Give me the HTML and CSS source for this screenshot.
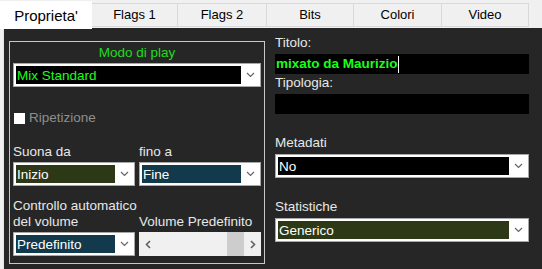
FILE: index.html
```html
<!DOCTYPE html>
<html lang="it">
<head>
    <meta charset="UTF-8">
    <title>Proprieta'</title>
    <link rel="stylesheet" href="styles.css">
</head>
<body>

<div class="tabs">
    <div class="tab active">Proprieta'</div>
    <div class="tab w86">Flags 1</div>
    <div class="tab w89">Flags 2</div>
    <div class="tab w87">Bits</div>
    <div class="tab w88">Colori</div>
    <div class="tab w87">Video</div>
</div>

<div class="panel">
    <div class="group">
        <div class="legend">Modo di play</div>
        <div class="combo">
            <div class="val black green">Mix Standard</div>
            <div class="arr"><svg width="9" height="6" viewBox="0 0 9 6"><polyline points="1,1 4.5,4.5 8,1" fill="none" stroke="#666" stroke-width="1.2"/></svg></div>
        </div>

        <label class="check"><span class="box"></span>Ripetizione</label>

        <div class="grid row1">
            <div class="lbl">Suona da</div>
            <div class="lbl">fino a</div>
            <div class="combo">
                <div class="val olive">Inizio</div>
                <div class="arr"><svg width="9" height="6" viewBox="0 0 9 6"><polyline points="1,1 4.5,4.5 8,1" fill="none" stroke="#666" stroke-width="1.2"/></svg></div>
            </div>
            <div class="combo">
                <div class="val teal">Fine</div>
                <div class="arr"><svg width="9" height="6" viewBox="0 0 9 6"><polyline points="1,1 4.5,4.5 8,1" fill="none" stroke="#666" stroke-width="1.2"/></svg></div>
            </div>
        </div>

        <div class="grid row2">
            <div class="lbl">Controllo automatico<br>del volume</div>
            <div class="lbl bottom">Volume Predefinito</div>
            <div class="combo">
                <div class="val teal">Predefinito</div>
                <div class="arr"><svg width="9" height="6" viewBox="0 0 9 6"><polyline points="1,1 4.5,4.5 8,1" fill="none" stroke="#666" stroke-width="1.2"/></svg></div>
            </div>
            <div class="scroll">
                <div class="sarr"><svg width="6" height="9" viewBox="0 0 6 9"><polyline points="5,1 1.5,4.5 5,8" fill="none" stroke="#606060" stroke-width="1.6"/></svg></div>
                <div class="track"><div class="thumb"></div></div>
                <div class="sarr"><svg width="6" height="9" viewBox="0 0 6 9"><polyline points="1,1 4.5,4.5 1,8" fill="none" stroke="#606060" stroke-width="1.6"/></svg></div>
            </div>
        </div>
    </div>

    <div class="side">
        <div class="lbl">Titolo:</div>
        <div class="field bold green">mixato da Maurizio<span class="caret"></span></div>
        <div class="lbl">Tipologia:</div>
        <div class="field"></div>

        <div class="lbl gap">Metadati</div>
        <div class="combo">
            <div class="val black">No</div>
            <div class="arr"><svg width="9" height="6" viewBox="0 0 9 6"><polyline points="1,1 4.5,4.5 8,1" fill="none" stroke="#666" stroke-width="1.2"/></svg></div>
        </div>

        <div class="lbl gap">Statistiche</div>
        <div class="combo">
            <div class="val olive">Generico</div>
            <div class="arr"><svg width="9" height="6" viewBox="0 0 9 6"><polyline points="1,1 4.5,4.5 8,1" fill="none" stroke="#666" stroke-width="1.2"/></svg></div>
        </div>
    </div>
</div>

</body>
</html>
```

FILE: styles.css
```css
body,div{margin:0;padding:0}
body{
    font:13.5px/16px "Liberation Sans", Arial, sans-serif;
    background:#f0f0f0;
    color:#e8e8e8;
    width:542px;
    height:269px;
    overflow:hidden;
}
.tabs{
    display:flex;
    height:28px;
    color:#000;
    font-size:13px;
}
.tab{
    height:24px;
    margin-top:3px;
    box-sizing:border-box;
    border:1px solid #d9d9d9;
    border-left:0;
    background:#f0f0f0;
    text-align:center;
    line-height:22px;
}
.tab.active{
    width:92px;
    height:28px;
    margin-top:1px;
    border:0;
    background:#fff;
    line-height:30px;
    font-size:15px;
}
.w86{width:86px}
.w87{width:87px}
.w88{width:88px}
.w89{width:89px}

.panel{
    display:flex;
    height:241px;
    margin-left:3px;
    border-left:1px solid #e4e4e4;
    background:#262626;
    padding:13px 0 0 5px;
    box-sizing:border-box;
}
.group{
    width:256px;
    height:223px;
    box-sizing:border-box;
    border:1px solid #c8c8c8;
    padding:2px 3px 0 3px;
}
.legend{
    color:#1fdc1f;
    text-align:center;
    line-height:17px;
    margin-bottom:2px;
}
.lbl{white-space:nowrap}
.combo{
    display:flex;
    height:24px;
    box-sizing:border-box;
    border:1px solid #a8a8a8;
    background:#fff;
    padding:2px 0 2px 2px;
}
.val{
    flex:1;
    padding-left:1px;
    line-height:20px;
    color:#fff;
    white-space:nowrap;
    overflow:hidden;
}
.arr{
    width:19px;
    display:flex;
    align-items:center;
    justify-content:center;
}
.black{background:#000}
.olive{background:#2d3916}
.teal{background:#123a4c}
.green{color:#1aff1a}
.bold{font-weight:bold}

.check{
    display:flex;
    align-items:center;
    margin:23px 0 0 1px;
    color:#8e8e8e;
    height:16px;
}
.box{
    width:11px;
    height:11px;
    background:#fff;
    margin-right:4px;
}
.grid{
    display:grid;
    grid-template-columns:122px 122px;
    column-gap:4px;
    row-gap:2px;
}
.row1{margin-top:18px}
.row2{margin-top:12px}
.bottom{align-self:end}

.scroll{
    display:flex;
    height:24px;
    background:#f0f0f0;
}
.sarr{
    width:17px;
    display:flex;
    align-items:center;
    justify-content:center;
}
.track{
    flex:1;
    display:flex;
    justify-content:flex-end;
}
.thumb{
    width:17px;
    background:#cdcdcd;
}

.side{
    width:254px;
    margin-left:10px;
    margin-top:-6px;
}
.side .lbl{margin-bottom:3px}
.field{
    height:20px;
    background:#000;
    line-height:20px;
    padding-left:1px;
    margin-bottom:1px;
    display:flex;
    align-items:center;
}
.caret{
    width:1px;
    height:17px;
    background:#fff;
}
.side .gap{margin-top:21px}
```
